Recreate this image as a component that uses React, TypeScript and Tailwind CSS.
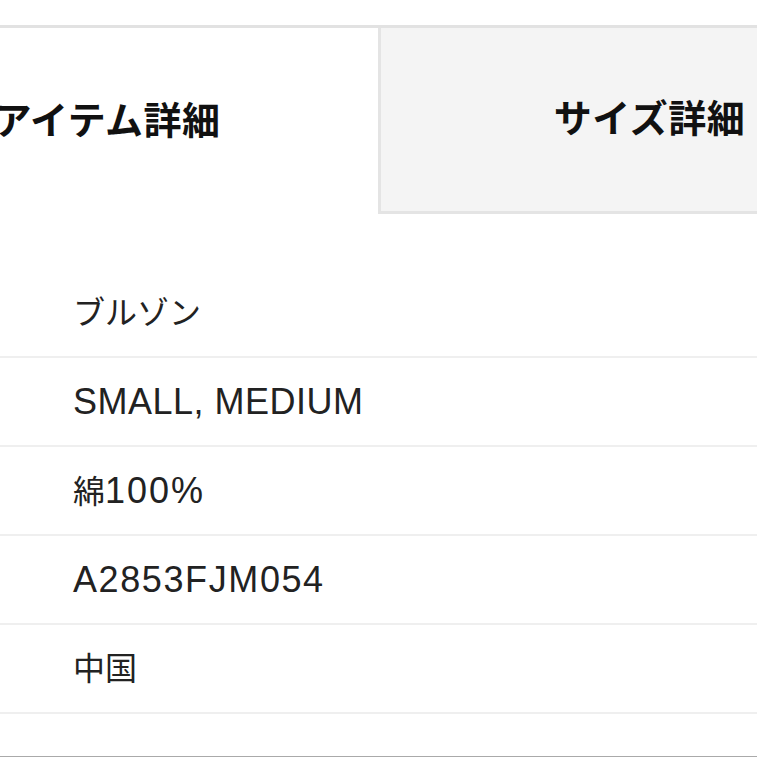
import React from 'react';

type Seg = { t: string; cjk?: boolean; cls?: string };

const rows: Seg[][] = [
  [{ t: 'ブルゾン', cjk: true }],
  [{ t: 'SMALL, MEDIUM', cls: 'tracking-[0.5px]' }],
  [{ t: '綿', cjk: true }, { t: '100%', cls: 'tracking-[2px]' }],
  [{ t: 'A2853FJM054', cls: 'tracking-[1.6px]' }],
  [{ t: '中国', cjk: true }],
];

export default function App() {
  return (
    <div className="w-[757px] h-[757px] overflow-hidden bg-white" style={{ fontFamily: '"Liberation Sans", "Noto Sans CJK JP", sans-serif' }}>
      <div className="w-[1082px] -ml-[164px] pt-[25px]">
        {/* tabs */}
        <div className="flex border-t-[3px] border-[#e2e2e2]">
          <button className="w-[542px] h-[186px] flex items-center justify-center bg-white text-[38px] font-bold text-[#111] tracking-[0.5px]">
            アイテム詳細
          </button>
          <button className="flex-1 h-[186px] flex items-center justify-center bg-[#f4f4f4] border-l-[3px] border-b-[3px] border-[#e4e4e4] text-[38px] font-bold text-[#111] tracking-[0.5px]">
            サイズ詳細
          </button>
        </div>

        {/* spec rows */}
        <div className="mt-[55px]">
          {rows.map((segs, i) => (
            <div key={i} className="h-[89px] flex items-center border-b-2 border-[#efefef] pl-[237px]">
              <span className="text-[#222] leading-none">
                {segs.map((s, j) => (
                  <span key={j} className={s.cjk ? 'text-[32px]' : `text-[36px] ${s.cls}`}>
                    {s.t}
                  </span>
                ))}
              </span>
            </div>
          ))}
        </div>
        <div className="mt-[42px] border-t-2 border-[#aaaaaa]" />
      </div>
    </div>
  );
}
